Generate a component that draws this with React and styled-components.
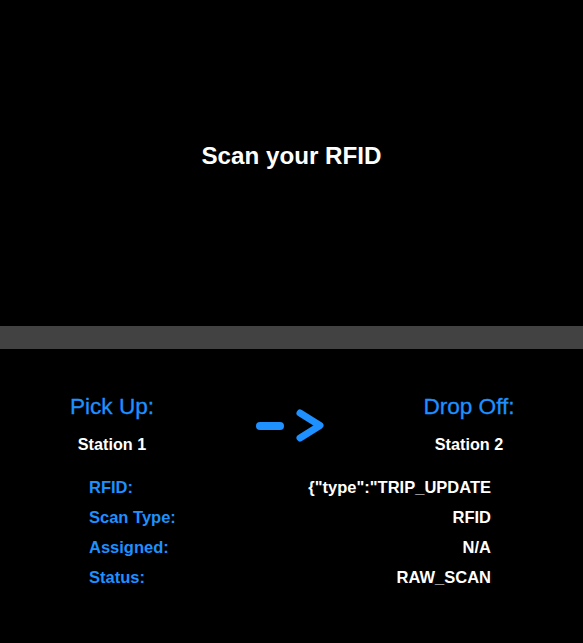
import React from 'react'
import styled, { createGlobalStyle } from 'styled-components'

const GlobalStyle = createGlobalStyle`
  html, body {
    margin: 0;
    padding: 0;
    background: #000;
  }
  body {
    font-family: "Liberation Sans", Arial, sans-serif;
    color: #fff;
  }
`

const BLUE = '#1e90ff'

const Screen = styled.div`
  width: 583px;
  height: 643px;
  background: #000;
  display: flex;
  flex-direction: column;
`

const ScanArea = styled.div`
  height: 326px;
  display: flex;
  align-items: center;
  justify-content: center;
  padding-bottom: 14px;
  box-sizing: border-box;
`

const Title = styled.h1`
  margin: 0;
  font-size: 24.2px;
  line-height: 28px;
  font-weight: 700;
  color: #fff;
`

const Divider = styled.div`
  height: 23px;
  background: #424242;
`

const Route = styled.div`
  display: grid;
  grid-template-columns: 120px 1fr 120px;
  align-items: center;
  padding: 0 54px 0 52px;
  margin-top: 45px;
`

const Stop = styled.div`
  display: flex;
  flex-direction: column;
  align-items: center;
  gap: 14px;
`

const StopLabel = styled.div`
  font-size: 22.6px;
  line-height: 26px;
  color: ${BLUE};
  white-space: nowrap;
  -webkit-text-stroke: 0.3px ${BLUE};
`

const StopName = styled.div`
  font-size: 16.2px;
  line-height: 20px;
  font-weight: 700;
  color: #fff;
  white-space: nowrap;
`

const ArrowWrap = styled.div`
  display: flex;
  justify-content: center;
  padding-top: 4px;
`

const Details = styled.div`
  width: 402px;
  margin: 18px 0 0 89px;
  display: flex;
  flex-direction: column;
`

const Row = styled.div`
  display: flex;
  justify-content: space-between;
  align-items: center;
  height: 30px;
  font-size: 16.5px;
  font-weight: 700;
`

const Label = styled.span`
  color: ${BLUE};
`

const Value = styled.span`
  color: #fff;
  white-space: nowrap;
`

const Arrow = () => (
  <svg width="70" height="36" viewBox="0 0 70 36" fill="none">
    <line x1="4" y1="18" x2="24" y2="18" stroke={BLUE} strokeWidth="8" strokeLinecap="round" />
    <polyline
      points="44,5 64,17.5 44,30"
      stroke={BLUE}
      strokeWidth="7"
      strokeLinecap="round"
      strokeLinejoin="round"
    />
  </svg>
)

const details = [
  ['RFID:', '{"type":"TRIP_UPDATE'],
  ['Scan Type:', 'RFID'],
  ['Assigned:', 'N/A'],
  ['Status:', 'RAW_SCAN'],
]

export default function App() {
  return (
    <>
      <GlobalStyle />
      <Screen>
        <ScanArea>
          <Title>Scan your RFID</Title>
        </ScanArea>
        <Divider />
        <Route>
          <Stop>
            <StopLabel>Pick Up:</StopLabel>
            <StopName>Station 1</StopName>
          </Stop>
          <ArrowWrap>
            <Arrow />
          </ArrowWrap>
          <Stop>
            <StopLabel>Drop Off:</StopLabel>
            <StopName>Station 2</StopName>
          </Stop>
        </Route>
        <Details>
          {details.map(([label, value]) => (
            <Row key={label}>
              <Label>{label}</Label>
              <Value>{value}</Value>
            </Row>
          ))}
        </Details>
      </Screen>
    </>
  )
}
